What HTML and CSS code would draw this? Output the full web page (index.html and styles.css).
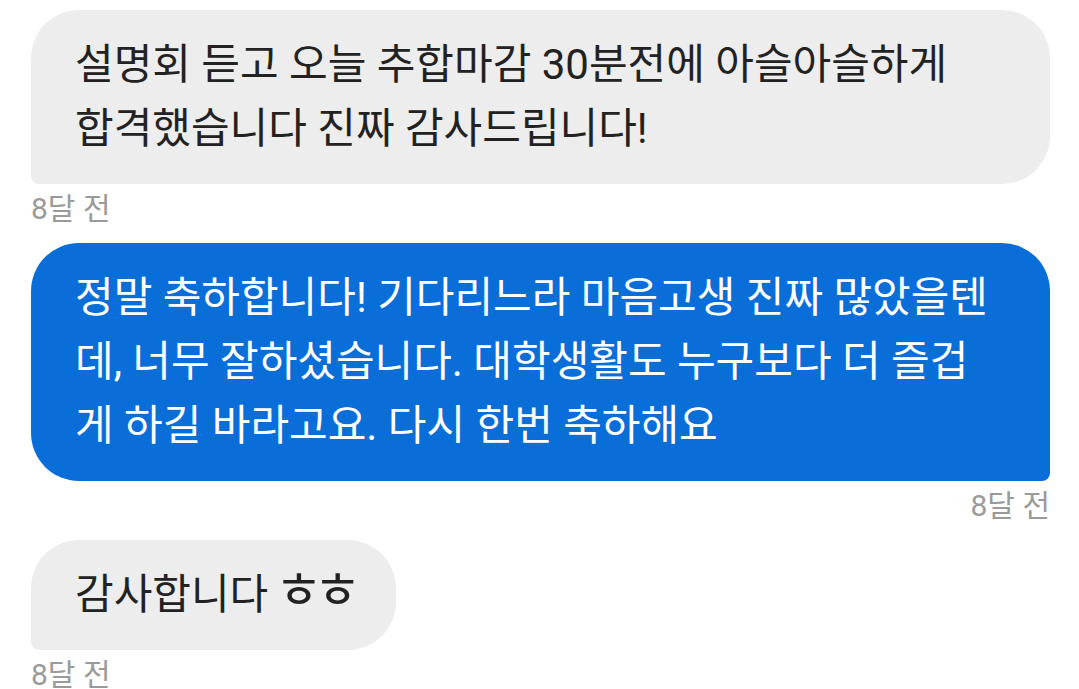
FILE: index.html
```html
<!DOCTYPE html>
<html lang="ko">
<head>
  <meta charset="UTF-8">
  <meta name="viewport" content="width=device-width, initial-scale=1.0">
  <title>메시지</title>
  <link rel="stylesheet" href="styles.css">
</head>
<body>

  <div class="chat">
    <div class="msg received">
      <div class="bubble">설명회 듣고 오늘 추합마감 30분전에 아슬아슬하게 <span class="nowrap">합격했습니다</span> 진짜 감사드립니다!</div>
      <div class="time">8달 전</div>
    </div>

    <div class="msg sent">
      <div class="bubble">정말 축하합니다! 기다리느라 마음고생 진짜 많았을텐데, 너무 잘하셨습니다. 대학생활도 누구보다 더 즐겁게 하길 바라고요. 다시 한번 축하해요</div>
      <div class="time">8달 전</div>
    </div>

    <div class="msg received">
      <div class="bubble">감사합니다 <span class="jamo">ㅎㅎ</span></div>
      <div class="time">8달 전</div>
    </div>
  </div>

</body>
</html>
```

FILE: styles.css
```css
body {
  margin: 0;
  background-color: #ffffff;
  font-family: Roboto, "Noto Sans CJK KR", sans-serif;
}
.chat {
  display: flex;
  flex-direction: column;
  gap: 9px;
  padding: 10px 29px 0 31px;
}
.msg {
  display: flex;
  flex-direction: column;
}
.bubble {
  max-width: 100%;
  box-sizing: border-box;
  padding: 23px 44px;
  font-size: 42px;
  line-height: 64px;
  border-radius: 48px;
}
.nowrap {
  white-space: nowrap;
}
.jamo {
  font-size: 52px;
  line-height: 0;
  letter-spacing: -9px;
  margin-left: -4px;
}
.time {
  font-size: 30px;
  line-height: 50px;
  color: #9a9a9a;
}
.received {
  align-items: flex-start;
}
.received .bubble {
  background-color: #ededed;
  color: #222222;
  border-bottom-left-radius: 8px;
}
.sent {
  align-items: flex-end;
}
.sent .bubble {
  background-color: #0a6ed8;
  color: #ffffff;
  border-bottom-right-radius: 8px;
}
```
